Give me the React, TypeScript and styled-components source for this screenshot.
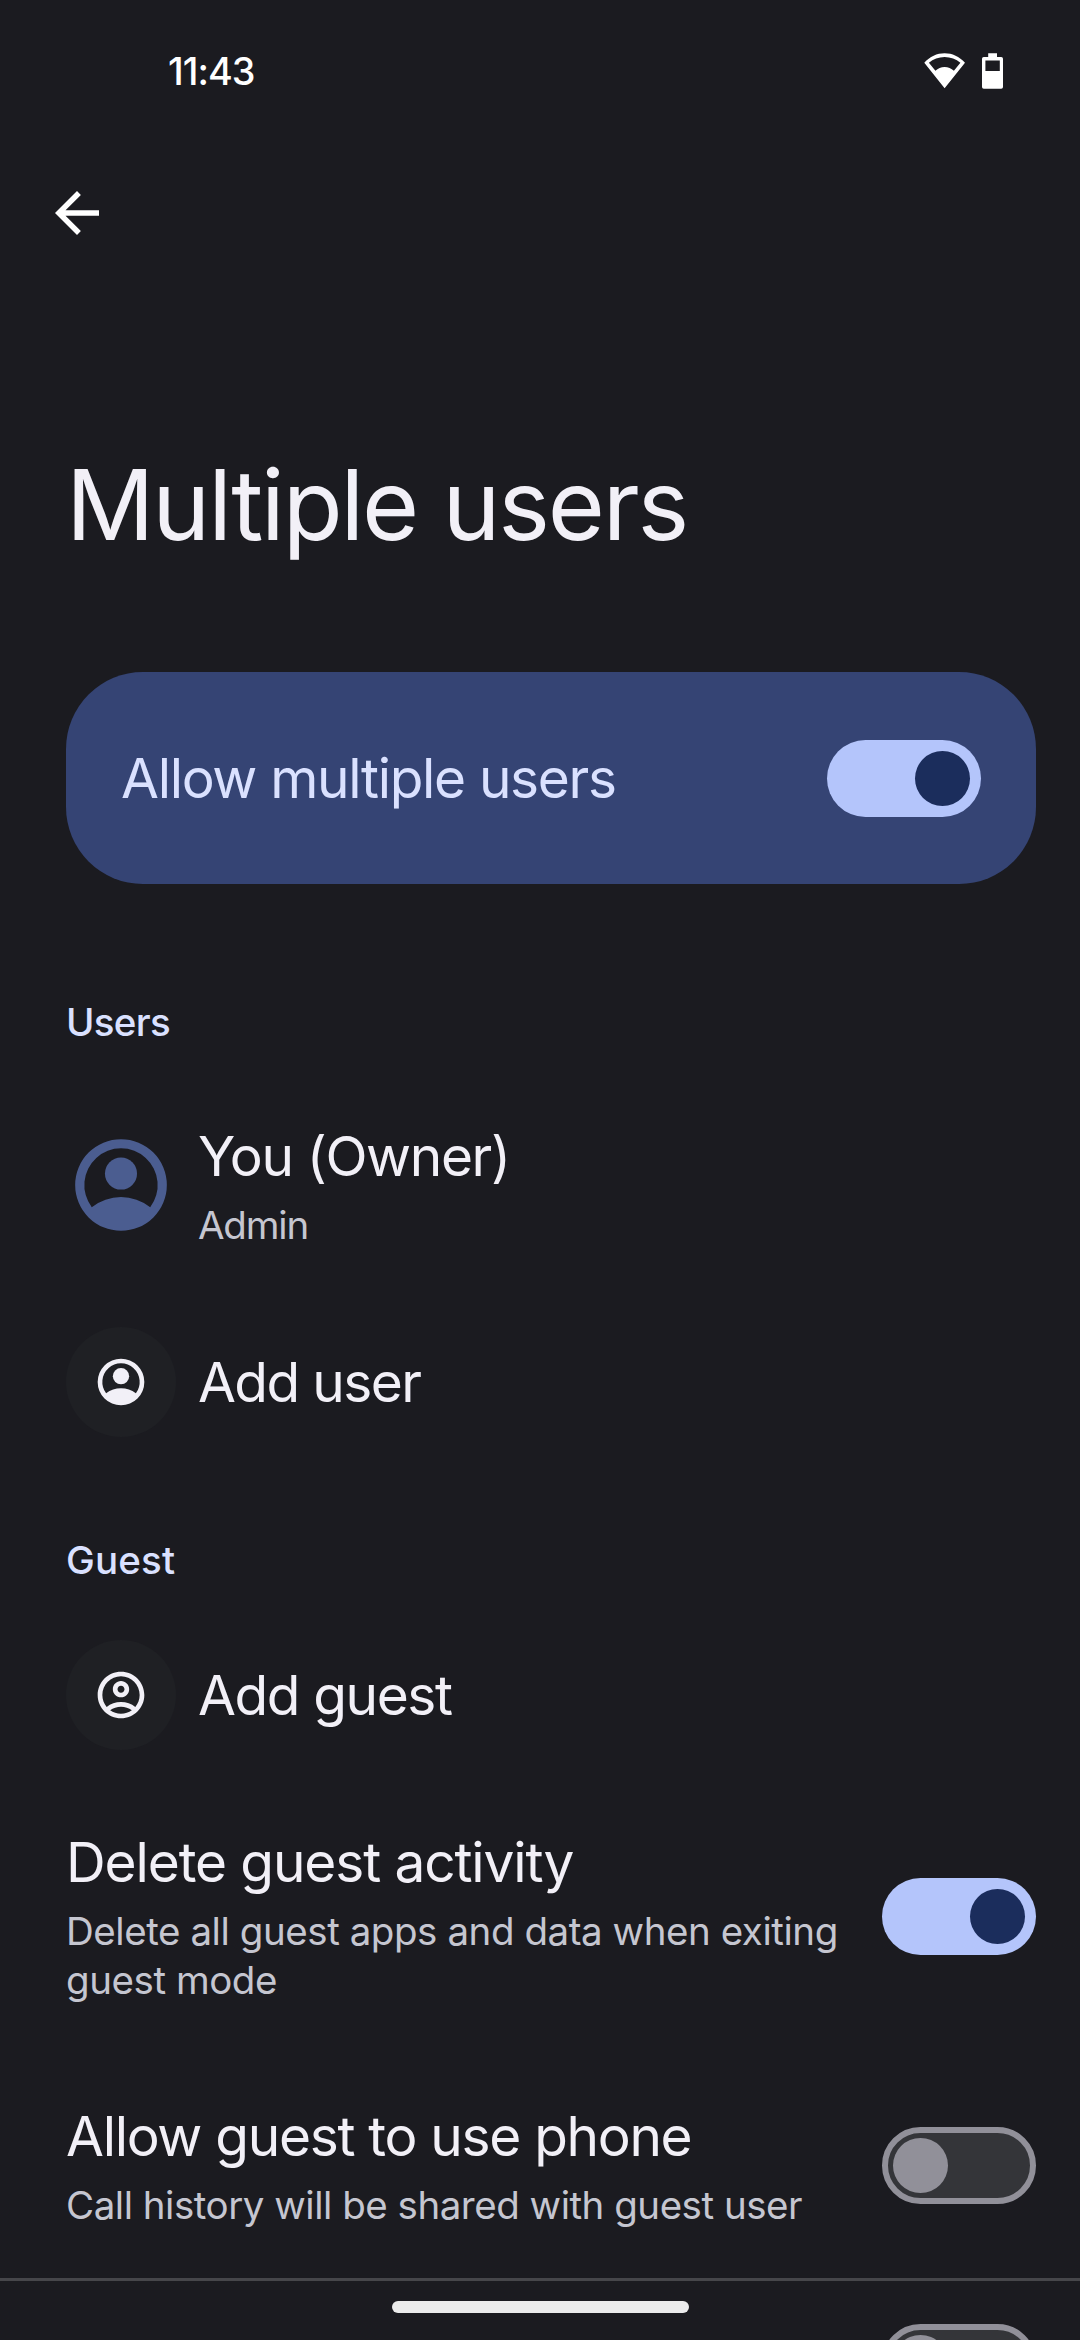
import React from 'react';
import styled, { createGlobalStyle } from 'styled-components';

const GlobalStyle = createGlobalStyle`
  * { box-sizing: border-box; }
  body {
    margin: 0;
    background: #1b1b20;
    font-family: Inter, Roboto, sans-serif;
    font-kerning: normal;
  }
`;

const Screen = styled.div`
  position: relative;
  width: 1080px;
  height: 2340px;
  overflow: hidden;
  display: flex;
  flex-direction: column;
  background: #1b1b20;
  color: #f2f0f7;
`;

const StatusBar = styled.header`
  flex: none;
  height: 142px;
  padding: 0 77px 0 168px;
  display: flex;
  align-items: center;
  justify-content: space-between;
  color: #fff;
`;

const Clock = styled.time`
  font-size: 37.8px;
  font-weight: 500;
  letter-spacing: -0.95px;
  line-height: 48px;
`;

const StatusIcons = styled.div`
  display: flex;
  align-items: center;
  gap: 16px;
  svg { display: block; }
`;

const AppBar = styled.nav`
  flex: none;
  height: 142px;
  padding-left: 44px;
  display: flex;
  align-items: center;
`;

const BackButton = styled.button`
  width: 66px;
  height: 66px;
  padding: 0;
  border: 0;
  background: none;
  color: #fff;
  svg { display: block; width: 100%; height: 100%; }
`;

const Content = styled.main`
  flex: none;
  display: flex;
  flex-direction: column;
  padding: 0 44px 0 66px;
`;

const PageTitle = styled.h1`
  margin: 160px 0 107px;
  font-size: 98px;
  font-weight: 400;
  line-height: 121px;
  letter-spacing: -2.16px;
`;

const MainSwitchCard = styled.section`
  display: flex;
  align-items: center;
  justify-content: space-between;
  padding: 68px 55px 67px;
  border-radius: 77px;
  background: #354474;
  color: #dae1ff;
`;

const CardLabel = styled.span`
  padding-bottom: 2px;
  font-size: 55px;
  line-height: 66px;
  letter-spacing: -1.32px;
`;

const Track = styled.span<{ $on: boolean }>`
  flex: none;
  display: flex;
  align-items: center;
  justify-content: ${(p) => (p.$on ? 'flex-end' : 'flex-start')};
  width: 154px;
  height: 77px;
  padding: 0 ${(p) => (p.$on ? 11 : 5)}px;
  border: ${(p) => (p.$on ? '0' : '6px solid #919099')};
  border-radius: 39px;
  background: ${(p) => (p.$on ? '#b4c5fb' : '#343539')};
`;

const Thumb = styled.span<{ $on: boolean }>`
  width: 55px;
  height: 55px;
  border-radius: 50%;
  background: ${(p) => (p.$on ? '#1b2d5c' : '#919099')};
`;

const SectionHeader = styled.h2<{ $top: number; $tracking: number }>`
  margin: ${(p) => p.$top}px 0 0;
  font-size: 38.5px;
  font-weight: 500;
  line-height: 50px;
  letter-spacing: ${(p) => p.$tracking}px;
  color: #dae1ff;
`;

const UserRow = styled.div<{ $top: number }>`
  margin-top: ${(p) => p.$top}px;
  display: flex;
  align-items: center;
  gap: 22px;
`;

const Avatar = styled.span<{ $filled?: boolean }>`
  flex: none;
  display: grid;
  place-items: center;
  width: 110px;
  height: 110px;
  border-radius: 50%;
  background: ${(p) => (p.$filled ? '#1f2024' : 'none')};
  color: ${(p) => (p.$filled ? '#f2f0f7' : '#4b5d90')};
  svg {
    display: block;
    width: ${(p) => (p.$filled ? 56 : 110)}px;
    height: ${(p) => (p.$filled ? 56 : 110)}px;
    margin: ${(p) => (p.$filled ? '0 1px 1px 0' : '0')};
  }
`;

const TextBlock = styled.div<{ $inset?: string }>`
  display: flex;
  flex-direction: column;
  gap: 12px;
  padding: ${(p) => p.$inset ?? '0'};
`;

const RowTitle = styled.span<{ $tracking: number }>`
  font-size: 55px;
  line-height: 66px;
  letter-spacing: ${(p) => p.$tracking}px;
  white-space: nowrap;
`;

const Summary = styled.span<{ $tracking: number }>`
  font-size: 38.5px;
  line-height: 49px;
  letter-spacing: ${(p) => p.$tracking}px;
  color: #c5c6d0;
`;

const SettingRow = styled.div<{ $top: number }>`
  margin-top: ${(p) => p.$top}px;
  display: flex;
  align-items: center;
  justify-content: space-between;
`;

const SwitchSlot = styled.div`
  padding-bottom: 2px;
`;

const NavigationBar = styled.footer`
  position: absolute;
  left: 0;
  right: 0;
  bottom: 0;
  height: 62px;
  padding-top: 20px;
  border-top: 3px solid #46464a;
  display: flex;
  justify-content: center;
`;

const Handle = styled.span`
  width: 297px;
  height: 11.5px;
  border-radius: 6px;
  background: #ececec;
`;

function Switch({ on }: { on: boolean }) {
  return (
    <Track $on={on} role="switch" aria-checked={on}>
      <Thumb $on={on} />
    </Track>
  );
}

function WifiIcon() {
  return (
    <svg width="42" height="36" viewBox="0 0 42 36" fill="currentColor">
      <path
        fillRule="evenodd"
        d="M0.3 9.8C5.8 3.4 13 0.2 20.6 0.2S35.4 3.4 41 9.8L20.6 35.2ZM4.9 9.7L11.4 17.7C14 15.2 17 13.9 20.6 13.9S27.3 15.2 29.9 17.7L36.4 9.7C32 6 26.6 3.9 20.6 3.9S9.3 6 4.9 9.7Z"
      />
    </svg>
  );
}

function BatteryIcon() {
  return (
    <svg width="21" height="36" viewBox="0 0 21 36" fill="currentColor">
      <path
        fillRule="evenodd"
        d="M6.2 0.3H15V4H19.2Q21 4 21 5.8V34Q21 35.8 19.2 35.8H1.8Q0 35.8 0 34V5.8Q0 4 1.8 4H6.2ZM3.4 7.4V18H17.8V7.4Z"
      />
    </svg>
  );
}

function BackIcon() {
  return (
    <svg viewBox="0 0 24 24" fill="currentColor">
      <path d="M20 11H7.83l5.59-5.59L12 4l-8 8 8 8 1.41-1.41L7.83 13H20v-2z" />
    </svg>
  );
}

function AccountFilledIcon() {
  return (
    <svg viewBox="0 0 24 24" fill="currentColor">
      <path
        fillRule="evenodd"
        d="M12 2a10 10 0 1 0 0 20a10 10 0 1 0 0-20zM5.62 16.83A8 8 0 1 1 18.38 16.83A10.4 10.4 0 0 0 5.62 16.83z"
      />
      <circle cx="12" cy="9.5" r="3.5" />
    </svg>
  );
}

function AccountOutlineIcon() {
  return (
    <svg viewBox="0 0 24 24" fill="currentColor">
      <path d="M12 2C6.48 2 2 6.48 2 12s4.48 10 10 10 10-4.48 10-10S17.52 2 12 2zM7.35 18.5C8.66 17.56 10.26 17 12 17s3.34.56 4.65 1.5C15.34 19.44 13.74 20 12 20s-3.34-.56-4.65-1.5zm10.79-1.38C16.45 15.8 14.32 15 12 15s-4.45.8-6.14 2.12C4.7 15.73 4 13.95 4 12c0-4.42 3.58-8 8-8s8 3.58 8 8c0 1.95-.7 3.73-1.86 5.12z" />
      <path d="M12 6c-1.93 0-3.5 1.57-3.5 3.5S10.07 13 12 13s3.5-1.57 3.5-3.5S13.93 6 12 6zm0 5c-.83 0-1.5-.67-1.5-1.5S11.17 8 12 8s1.5.67 1.5 1.5S12.83 11 12 11z" />
    </svg>
  );
}

export default function App() {
  return (
    <>
      <GlobalStyle />
      <Screen>
        <StatusBar>
          <Clock>11:43</Clock>
          <StatusIcons>
            <WifiIcon />
            <BatteryIcon />
          </StatusIcons>
        </StatusBar>
        <AppBar>
          <BackButton aria-label="Back">
            <BackIcon />
          </BackButton>
        </AppBar>
        <Content>
          <PageTitle>Multiple users</PageTitle>
          <MainSwitchCard>
            <CardLabel>Allow multiple users</CardLabel>
            <Switch on />
          </MainSwitchCard>

          <SectionHeader $top={113} $tracking={-0.7}>Users</SectionHeader>
          <UserRow $top={73}>
            <Avatar>
              <AccountFilledIcon />
            </Avatar>
            <TextBlock $inset="3px 0 0">
              <RowTitle $tracking={-1.35}>You (Owner)</RowTitle>
              <Summary $tracking={-1.2}>Admin</Summary>
            </TextBlock>
          </UserRow>
          <UserRow $top={77}>
            <Avatar $filled>
              <AccountFilledIcon />
            </Avatar>
            <TextBlock $inset="0 0 1px">
              <RowTitle $tracking={-1.6}>Add user</RowTitle>
            </TextBlock>
          </UserRow>

          <SectionHeader $top={98} $tracking={0.15}>Guest</SectionHeader>
          <UserRow $top={55}>
            <Avatar $filled>
              <AccountOutlineIcon />
            </Avatar>
            <TextBlock $inset="0 0 1px">
              <RowTitle $tracking={-1.39}>Add guest</RowTitle>
            </TextBlock>
          </UserRow>
          <SettingRow $top={79}>
            <TextBlock>
              <RowTitle $tracking={-1.12}>Delete guest activity</RowTitle>
              <Summary $tracking={-0.44}>
                Delete all guest apps and data when exiting
                <br />
                guest mode
              </Summary>
            </TextBlock>
            <SwitchSlot>
              <Switch on />
            </SwitchSlot>
          </SettingRow>
          <SettingRow $top={98}>
            <TextBlock>
              <RowTitle $tracking={-1.3}>Allow guest to use phone</RowTitle>
              <Summary $tracking={-0.48}>Call history will be shared with guest user</Summary>
            </TextBlock>
            <SwitchSlot>
              <Switch on={false} />
            </SwitchSlot>
          </SettingRow>
          <SettingRow $top={94}>
            <TextBlock />
            <SwitchSlot>
              <Switch on={false} />
            </SwitchSlot>
          </SettingRow>
        </Content>
        <NavigationBar>
          <Handle />
        </NavigationBar>
      </Screen>
    </>
  );
}
